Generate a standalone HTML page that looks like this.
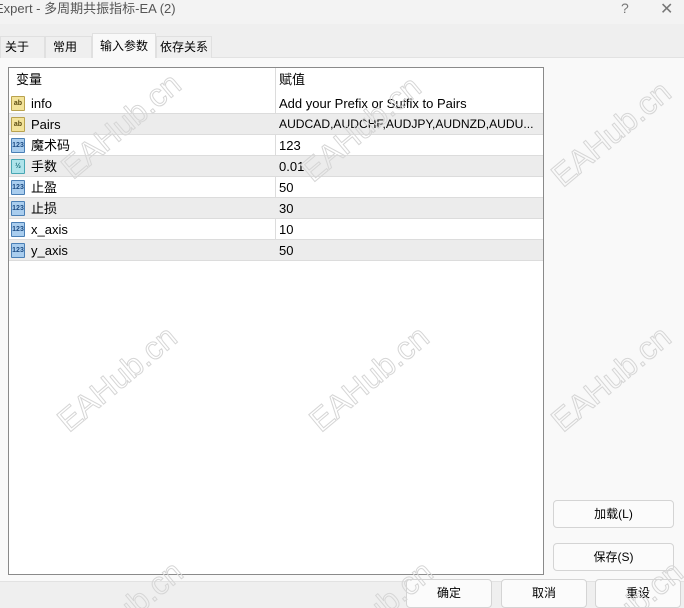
<!DOCTYPE html>
<html><head><meta charset="utf-8"><style>
*{margin:0;padding:0;box-sizing:border-box}
html,body{width:684px;height:608px;overflow:hidden}
body{background:#efefef;font-family:"Liberation Sans","Noto Sans CJK SC",sans-serif;font-size:13px;color:#000;position:relative}
.abs{position:absolute}
.title{left:-5px;top:0;width:689px;height:24px;background:#f3f3f3;color:#555;font-size:13px;line-height:18px}
.panel{left:0;top:57px;width:684px;height:525px;background:#f9f9f9;border-top:1px solid #e2e2e2;border-bottom:1px solid #e2e2e2}
.tab{top:36px;height:22px;background:#efefef;border:1px solid #e0e0e0;border-bottom:none;line-height:20px;font-size:12px;padding-left:4px}
.tab.act{top:33px;height:25px;background:#f9f9f9;line-height:24px;padding-left:7px}
.tbl{left:8px;top:67px;width:536px;height:508px;background:#fff;border:1px solid #8a8a8a;overflow:hidden}
.row{position:absolute;left:0;width:534px;height:21px;border-bottom:1px solid #dcdcdc;line-height:21px;font-size:13px}
.row.g{background:#ececec}
.c1{position:absolute;left:22px;top:0}
.c2{position:absolute;left:270px;top:0;white-space:nowrap}
.vd{position:absolute;left:266px;top:0;width:1px;height:193px;background:#dcdcdc}
.ic{position:absolute;left:2px;top:3px;width:14px;height:15px;border:1px solid;border-radius:1px;font-size:7px;line-height:13px;text-align:center;font-weight:bold}
.ab{background:#f3e39a;border-color:#b9a24e;color:#5a4a10}
.n{background:#a9cdee;border-color:#4a7fb5;color:#1d4c84}
.f{background:#aee3ea;border-color:#48a6b3;color:#146a78}
.btn{background:#fbfbfb;border:1px solid #d4d4d4;border-radius:4px;text-align:center;font-size:12px}
</style></head><body>
<div class="abs title">Expert - 多周期共振指标-EA (2)</div>
<div class="abs" style="left:621px;top:0;color:#777;font-size:14px">?</div>
<div class="abs" style="left:660px;top:-1px;color:#777;font-size:16px">✕</div>
<div class="abs panel"></div>
<div class="abs tab" style="left:0;width:45px">关于</div>
<div class="abs tab" style="left:45px;width:47px;padding-left:7px">常用</div>
<div class="abs tab act" style="left:92px;width:64px">输入参数</div>
<div class="abs tab" style="left:156px;width:56px;padding-left:3px">依存关系</div>
<div class="abs tbl">
<div class="vd"></div>
<div class="row" style="top:0;height:25px;border:none;line-height:24px"><span class="c1" style="left:7px">变量</span><span class="c2">赋值</span></div>
<div class="row" style="top:25px"><span class="ic ab">ab</span><span class="c1">info</span><span class="c2">Add your Prefix or Suffix to Pairs</span></div>
<div class="row g" style="top:46px"><span class="ic ab">ab</span><span class="c1">Pairs</span><span class="c2" style="font-size:12.1px">AUDCAD,AUDCHF,AUDJPY,AUDNZD,AUDU...</span></div>
<div class="row" style="top:67px"><span class="ic n">123</span><span class="c1">魔术码</span><span class="c2">123</span></div>
<div class="row g" style="top:88px"><span class="ic f">½</span><span class="c1">手数</span><span class="c2">0.01</span></div>
<div class="row" style="top:109px"><span class="ic n">123</span><span class="c1">止盈</span><span class="c2">50</span></div>
<div class="row g" style="top:130px"><span class="ic n">123</span><span class="c1">止损</span><span class="c2">30</span></div>
<div class="row" style="top:151px"><span class="ic n">123</span><span class="c1">x_axis</span><span class="c2">10</span></div>
<div class="row g" style="top:172px"><span class="ic n">123</span><span class="c1">y_axis</span><span class="c2">50</span></div>
</div>
<div class="abs btn" style="left:553px;top:500px;width:121px;height:28px;line-height:26px">加载(L)</div>
<div class="abs btn" style="left:553px;top:543px;width:121px;height:28px;line-height:26px">保存(S)</div>
<div class="abs btn" style="left:406px;top:579px;width:86px;height:29px;line-height:27px">确定</div>
<div class="abs btn" style="left:501px;top:579px;width:86px;height:29px;line-height:27px">取消</div>
<div class="abs btn" style="left:595px;top:579px;width:86px;height:29px;line-height:27px">重设</div>
<svg class="abs" style="left:0;top:0;overflow:hidden" width="684" height="608">
<g font-family="Liberation Sans,sans-serif" font-size="32" fill="none" stroke="#d6d6d6" stroke-width="1" text-anchor="middle">
<text transform="translate(128,134) rotate(-40)">EAHub.cn</text>
<text transform="translate(368,137) rotate(-40)">EAHub.cn</text>
<text transform="translate(618,142) rotate(-40)">EAHub.cn</text>
<text transform="translate(124,387) rotate(-40)">EAHub.cn</text>
<text transform="translate(376,387) rotate(-40)">EAHub.cn</text>
<text transform="translate(618,387) rotate(-40)">EAHub.cn</text>
<text transform="translate(130,622) rotate(-40)">EAHub.cn</text>
<text transform="translate(380,622) rotate(-40)">EAHub.cn</text>
<text transform="translate(630,622) rotate(-40)">EAHub.cn</text>
</g></svg>
</body></html>
